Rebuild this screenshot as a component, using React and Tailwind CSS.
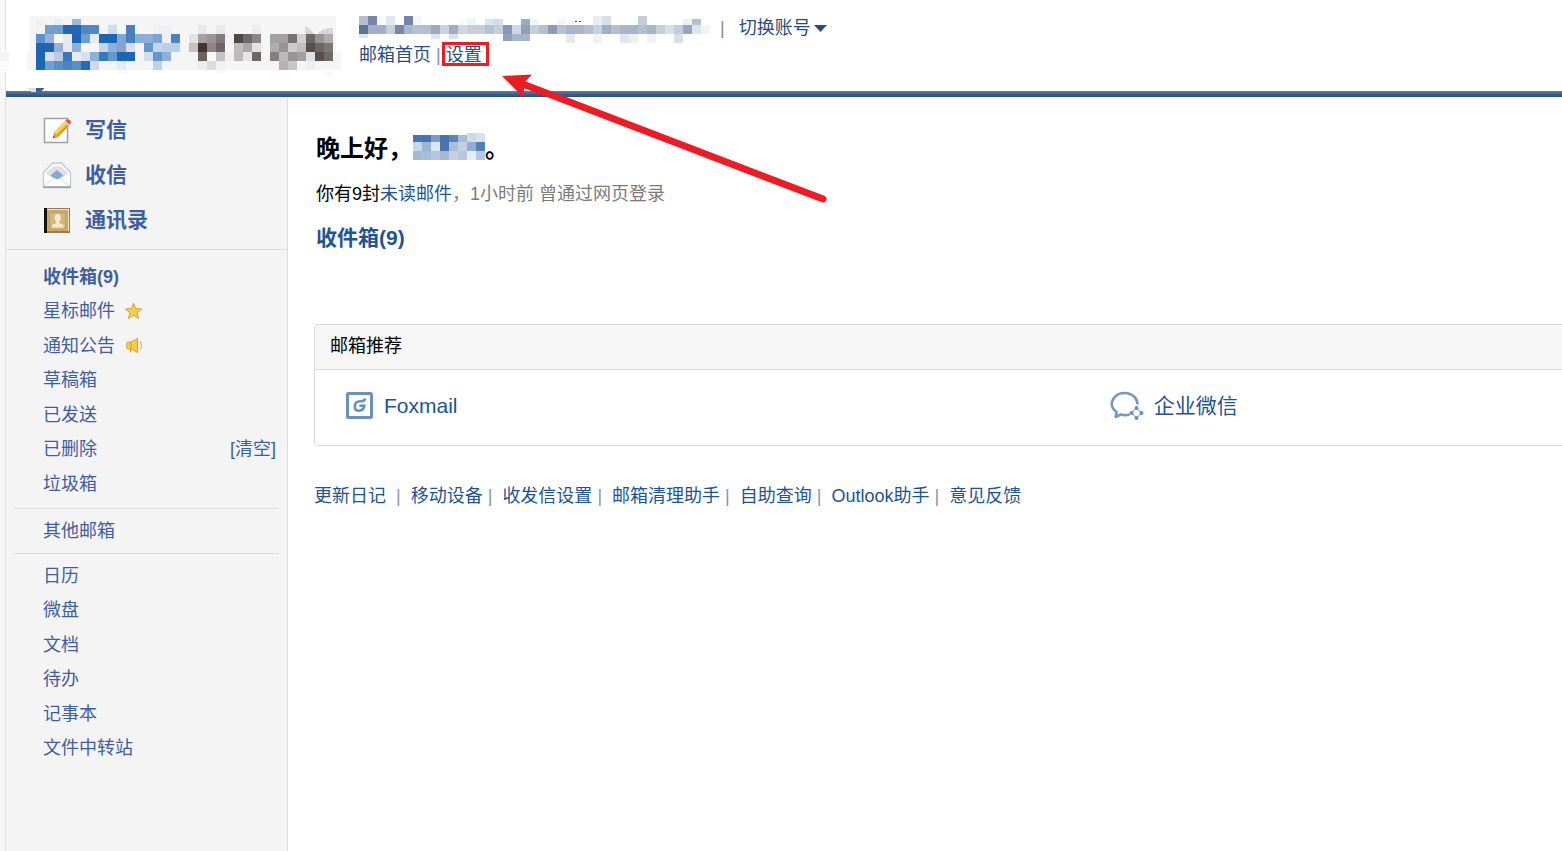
import React from 'react'

const CELL = 9

// each run: [x, y, height, colours left to right]; '' leaves the cell empty
const LOGO = [
  [0, 3, 6, ['#f0f0f0', '', '#e8eef3', '', '#9bb9d9']],
  [0, 9, 9, ['#f2f2f2', '#6f9ed0', '#6f9ed0', '#2468b4', '#2468b4', '#5088c5', '#5088c5', '', '#cfdcea', '', '#4680c2', '', '', '#eef0f3', '#eef0f5', '', '', '', '#e8e8e8', '', '#e8e8e8', '', '', '', '#ededed']],
  [0, 18, 9, ['#5a93cf', '#94b2db', '', '#e8eaee', '#1d66b4', '#6f9ed0', '#e8eaf2', '#1d66b4', '#1d66b4', '#7fa6d4', '#4680c2', '#8cafd7', '#8cafd7', '#7fa3d0', '#eceff5', '#4a84c4', '', '#e2e2e2', '#a5a1a3', '#989394', '#847a79', '#f0f0f0', '#524644', '#706868', '#8b8685', '', '#a3a0a1', '#a3a0a1', '#79716f', '#d0d0d0', '#6e6565', '#989394', '#b0adae']],
  [0, 27, 9, ['#1d66b4', '#1d66b4', '#94b2db', '#e8e8e8', '#8fb0d8', '', '', '#c5d5ea', '#8fb0da', '#7fa6d4', '#d8deee', '', '#6397cf', '#c5d5ea', '#b9cfe6', '#b9cfe6', '', '#c6c0bf', '#423633', '#8b8685', '#6e6565', '', '#c0bcbe', '#aaa5a6', '#e2e2e2', '', '#b0abad', '#989394', '#cbcbcb', '#c0bfc0', '#5a4e4c', '#6e6565', '#7d7874']],
  [0, 36, 9, ['#1d66b4', '#d8dff0', '#b9cce2', '#3478be', '#e8eaf2', '#d8dff0', '#8fb0d8', '#3478be', '#6397cf', '#1d66b4', '#1d66b4', '', '#d3deea', '#6397cf', '#8fb0d8', '', '', '', '#6e6263', '#f8f8f8', '#c3c3c3', '#f0f0f0', '#bdb8ba', '#e5e5e5', '#6e6565', '', '#84807f', '#bababa', '#989394', '#a39fa1', '#e0e0e0', '#5a4e4c', '#706868']],
  [0, 45, 9, ['#1d66b4', '#6f9ed0', '#5a90c8', '#4a84c4', '#5a90c8', '#246cb8', '#cdd8ea', '', '', '#e6eaf2', '', '', '', '#bfd1e8', '', '', '', '', '#ebebeb', '#dcdcdc', '#f0f0f0', '', '', '', '', '', '', '#b5b1b2', '#c6c6c6', '', '#eeeeee']],
]

const ACCOUNT = [
  [0, 0, 9, ['#b5bfd0', '#7588ac', '#f8f9fa', '#e2e6ee', '', '#7284a8', '#f5f6f8']],
  [99, 2, 7, ['#fbfbfc', '#f3f6f8']],
  [126, 3, 6, ['#dde3ea', '#d5dce6', '', '', '#9aabc3', '#f3f6f6', '', '', '#f3f4f7']],
  [234, 0, 9, ['#e9ecf1', '#d8dfe8', '', '', '', '#c3ccd9']],
  [324, 3, 6, ['#eef2f3', '#b4c1cf']],
  [0, 9, 9, ['#5d7297', '#a0adc4', '#a3aec5', '#c8cedd', '#7588ac', '#aab6ca', '#b5bfd0', '#b5bfd0', '#9aaac2', '#cdd2e0', '#9faec4', '#d0d6e0', '#c5cedb', '#c5cedb', '#b5c0d2', '#c5cedb', '#8497b5', '#d0d6e2', '#8f9fba', '#c5cedb', '#b5bfd0', '#8c9cb8', '#b5c2d0', '#a9b5cb', '#a9b5cb', '#b5bfd0', '#c9d0df', '#a0adc6', '#b5bfd0', '#a9b5cb', '#a9b5cb', '#b5bfd0', '#a9b5cb', '#c5cedb', '#d9dee7', '#c5cedb', '#97a5c0', '#dfe3ea', '#f2f3f7']],
  [0, 18, 4, ['#e4e4f0']],
  [72, 18, 5, ['#e0e3ea', '', '#dcdfe8']],
  [144, 18, 7, ['#919fbb', '#a4b5c8', '#a4b5c8']],
  [207, 18, 9, ['#e5e9ef', '', '', '#f0f1f5', '', '', '#e2e5ee', '#eef0f5', '', '#f1f2f6', '', '', '#d9dee7']],
]

const NAME = [
  [0, 2, 7, ['#4674ae', '#4674ae', '#7a9bc6', '#4674ae', '#5a85b8', '#a5bbd6']],
  [54, 0, 9, ['#cfd9ea', '#d8e1ef']],
  [0, 9, 9, ['#c9d5e8', '#9db4d5', '#dde6f1', '#4a75ae', '#a9bedb', '#c3d0e3', '#8eaed3', '#5480b8']],
  [0, 18, 9, ['#a3b9d6', '#a9bedb', '#b5c6df', '#a3b9d6', '#c3d0e3', '#b5c6df', '#e8edf6', '#b9c9df']],
]

const FOLDERS = [
  { name: '收件箱(9)', bold: true },
  { name: '星标邮件', icon: StarIcon },
  { name: '通知公告', icon: HornIcon },
  { name: '草稿箱' },
  { name: '已发送' },
  { name: '已删除', action: '[清空]' },
  { name: '垃圾箱' },
]

const TOOLS = ['日历', '微盘', '文档', '待办', '记事本', '文件中转站']

const LINKS = ['更新日记', '移动设备', '收发信设置', '邮箱清理助手', '自助查询', 'Outlook助手', '意见反馈']

export default function App() {
  return (
    <div className="relative flex min-h-screen overflow-hidden bg-[#f7f7f7] font-['Liberation_Sans','Noto_Sans_CJK_SC',sans-serif] text-[18px] leading-[27px] text-black">
      <div className="ml-[5px] flex min-w-0 flex-1 flex-col border-l border-[#e0e0e0] bg-white">
        <Header />
        <div className="flex flex-1">
          <Sidebar />
          <Home />
        </div>
      </div>
      <Smudges />
      <Arrow />
    </div>
  )
}

function Header() {
  return (
    <header>
      <div className="flex h-[91px] pl-[21px] pt-[15px]">
        <svg className="mt-px h-[61px] w-[314px] shrink-0" viewBox="0 0 314 61" shapeRendering="crispEdges" aria-label="logo">
          <path d="M2 0h307v36h5v18H0V36h2z" fill="#f5f5f5" />
          <path d="M91 54h9v4h-9zM189 54h9v4h-9zM296 54h9v7h-9z" fill="#fafafa" />
          <g transform="translate(9 0)"><Cells runs={LOGO} /></g>
          <path d="M278 10q6 3 9 8h-9zM290 18q6-7 16-6v6z" fill="#d6d6d6" shapeRendering="auto" />
        </svg>
        <div className="ml-[18px] text-[#2b4c7e]">
          <div className="flex h-[27px] items-start">
            <svg className="mt-px h-[27px] w-[351px]" viewBox="0 0 351 27" shapeRendering="crispEdges" aria-hidden="true">
              <Cells runs={ACCOUNT} />
              <path d="M216 5h2v1h-2zM220 5h2v1h-2z" fill="#2b4c7e" />
            </svg>
            <span className="ml-[10px] text-[#7d8bab]">|</span>
            <button type="button" className="ml-[14px] flex items-center gap-[3px]">
              切换账号
              <svg className="h-[7px] w-[13px]" viewBox="0 0 13 7" aria-hidden="true"><path d="M0 0h13L6.500 7z" fill="#2b4c7e" /></svg>
            </button>
          </div>
          <nav className="flex">
            <a href="#home">邮箱首页</a>
            <span className="mx-[5px] text-[#7d8bab]">|</span>
            <a href="#settings" className="relative">
              设置
              <span className="absolute -left-[4px] top-0 h-[24px] w-[47px] border-[3px] border-[#ec1c24]" />
            </a>
          </nav>
        </div>
      </div>
      <div className="h-[6px] bg-linear-to-b from-[#6a7a98] via-[#3d5f8c] to-[#1f5089]" />
    </header>
  )
}

function Sidebar() {
  return (
    <aside className="w-[282px] shrink-0 border-r border-[#dcdcdc] bg-[#f4f4f4] text-[#3f5ea1]">
      <nav className="border-b border-[#dcdcdc] pb-[7px] pl-[36px] pt-[10px] text-[21px] font-bold">
        <BigLink icon={<WriteIcon />} label="写信" />
        <BigLink icon={<InboxIcon />} label="收信" />
        <BigLink icon={<ContactsIcon />} label="通讯录" />
      </nav>
      <ul className="pb-[7px] pt-[10px]">
        {FOLDERS.map(({ name, bold, icon: Icon, action }) => (
          <li key={name} className="flex h-[34px] items-center pl-[37px] pr-[11px] even:h-[35px]">
            <a href="#folder" className={bold ? 'font-bold' : ''}>{name}</a>
            {Icon && <Icon />}
            {action && <button type="button" className="ml-auto">{action}</button>}
          </li>
        ))}
      </ul>
      <div className="mx-2 flex h-[46px] items-center border-y border-[#dcdcdc] pl-[29px]">
        <a href="#other">其他邮箱</a>
      </div>
      <ul className="pt-[5px]">
        {TOOLS.map((name) => (
          <li key={name} className="flex h-[34px] items-center pl-[37px] even:h-[35px]">
            <a href="#tool">{name}</a>
          </li>
        ))}
      </ul>
    </aside>
  )
}

function Home() {
  return (
    <main className="min-w-0 flex-1 pl-[26px]">
      <h1 className="mt-[33px] flex h-[36px] items-center pl-[2px] text-[24px] font-bold">
        晚上好，
        <svg className="-mt-[4px] ml-px h-[27px] w-[72px]" viewBox="0 0 72 27" shapeRendering="crispEdges" aria-hidden="true">
          <Cells runs={NAME} />
        </svg>
        。
      </h1>
      <p className="mt-[15px] pl-[2px]">
        你有9封<a href="#unread" className="text-[#1e5494]">未读邮件</a>
        <span className="text-[#7b7b7b]">，1小时前 曾通过网页登录</span>
      </p>
      <h2 className="mt-[16px] pl-[2px] text-[21px] font-bold text-[#1e5494]">
        <a href="#inbox">收件箱(9)</a>
      </h2>

      <section className="mt-[73px] rounded-l-[5px] border border-r-0 border-[#d9d9d9]">
        <h3 className="rounded-tl-[5px] border-b border-[#d9d9d9] bg-[#f6f6f6] px-[15px] pb-[9px] pt-[8px]">邮箱推荐</h3>
        <div className="grid grid-cols-[49fr_31fr] items-center pb-[24px] pt-[21px] text-[21px] leading-[30px] text-[#1e5494]">
          <a href="#foxmail" className="flex items-center pl-[31px]">
            <FoxmailIcon />
            <span className="ml-[10px]">Foxmail</span>
          </a>
          <a href="#wework" className="flex items-center pl-[31px]">
            <WeworkIcon />
            <span className="ml-[10px]">企业微信</span>
          </a>
        </div>
      </section>

      <footer className="mt-[37px] flex text-[#1e5494]">
        {LINKS.map((label, i) => (
          <React.Fragment key={label}>
            {i > 0 && <span className={`mr-[10px] text-[#8a93ab] ${i === 1 ? 'ml-[10px]' : 'ml-[5px]'}`}>|</span>}
            <a href="#link">{label}</a>
          </React.Fragment>
        ))}
      </footer>
    </main>
  )
}

function BigLink({ icon, label }) {
  return (
    <a href="#big" className="flex h-[45px] items-center gap-[13px]">
      {icon}
      {label}
    </a>
  )
}

function Cells({ runs }) {
  return runs.map(([x, y, h, colors]) =>
    colors.map((c, i) => c && <rect key={`${x}-${y}-${i}`} x={x + i * CELL} y={y} width={CELL} height={h} fill={c} />)
  )
}

function WriteIcon() {
  return (
    <svg className="h-[30px] w-[30px]" viewBox="0 0 30 30" aria-hidden="true">
      <rect x="2.500" y="3.500" width="23" height="24" fill="#fff" stroke="#a2a2a2" strokeWidth="1.500" />
      <path d="M13 22l-2 1 4 1 12-13-2-3z" fill="#cfcfcf" />
      <path d="M12 17.500L23 6l4 4-11 11.500-5 1.500z" fill="#f7b824" />
      <path d="M13.500 18.500L24.500 7" stroke="#ffdf75" strokeWidth="1.600" />
      <path d="M15.500 21L26.500 10" stroke="#d98a17" strokeWidth="1.200" />
      <path d="M12 17.500l4 4-5 1.500z" fill="#d3a066" />
      <path d="M10.800 23.200l.8-2.400 1.600 1.600z" fill="#555" />
      <path d="M22 7l1.500-1.500 4 4L26 11z" fill="#c9c9c9" />
      <path d="M23.500 5.500L25 4.300q1.500-.6 3 1t.8 2.700L27.500 9.500z" fill="#ee4a42" />
    </svg>
  )
}

function InboxIcon() {
  return (
    <svg className="h-[30px] w-[30px]" viewBox="0 0 30 30" aria-hidden="true">
      <path d="M1.500 12.500L10.500 3h9l9 9.500V27h-27z" fill="#fafbfc" stroke="#c3c8ce" strokeWidth="1.300" strokeLinejoin="round" />
      <path d="M4 13l7-6.500h8l7 6.500-7 6H11z" fill="#dde1e5" />
      <path d="M2.500 14l12.500 8 12.500-8v12h-25z" fill="#fff" opacity=".85" />
      <path d="M8.500 15.500L15 10l6.500 5.500-6.500 4z" fill="#86a6d6" />
      <path d="M2.500 26l8-6.500M27.500 26l-8-6.500" stroke="#d4d7da" />
      <path d="M1.200 27.300h27.600" stroke="#949da8" strokeWidth="1.600" />
    </svg>
  )
}

function ContactsIcon() {
  return (
    <svg className="h-[30px] w-[30px]" viewBox="0 0 30 30" aria-hidden="true">
      <rect x="2" y="3" width="26" height="25" fill="#9a7b4d" />
      <rect x="2" y="3" width="3" height="25" fill="#15120e" />
      <rect x="5" y="4" width="22" height="22" fill="#c9aa72" />
      <path d="M5 4.500h22M26.500 4v22" stroke="#efe2c4" />
      <rect x="7.500" y="7.500" width="16" height="17" fill="#d3b67e" stroke="#bf9f68" />
      <path d="M12.500 12.500q0-3.500 3.200-3.500t3.200 3.500q0 2.500-1.600 4v1.500l4.200 2v2.500H10V20l4.200-2v-1.500q-1.700-1.500-1.700-4z" fill="#f4e9cf" />
    </svg>
  )
}

function StarIcon() {
  return (
    <svg className="ml-[9px] h-[20px] w-[20px]" viewBox="0 0 20 20" aria-hidden="true">
      <path d="M9.500 1l2.200 5.700 6.100.2-4.800 3.800 1.700 5.900-5.200-3.400-5.200 3.400L6 10.700 1.200 6.900l6.100-.2z" fill="#f6cc44" stroke="#e2a045" />
    </svg>
  )
}

function HornIcon() {
  return (
    <svg className="ml-[9px] h-[20px] w-[20px]" viewBox="0 0 20 20" aria-hidden="true">
      <path d="M3.500 6H7l6.500-3.500v14L7 13H3.500Q2.500 12.500 2.500 9.500T3.500 6z" fill="#f6cc44" stroke="#e2a045" />
      <path d="M7 6v7M6.500 13v3.500M13.500 2v15" stroke="#dc9334" />
      <path d="M16 5.500q3 4 0 8" fill="none" stroke="#e8b273" strokeWidth="1.300" />
    </svg>
  )
}

function FoxmailIcon() {
  return (
    <svg className="h-[28px] w-[28px]" viewBox="0 0 28 28" fill="none" stroke="#6a90bd" aria-hidden="true">
      <rect x="1.500" y="1.500" width="24" height="24" rx="1" strokeWidth="3" />
      <path d="M19.500 6.500q-1 2.800-5 2.800-5.700.2-5.700 5.400 0 4 4.200 4 4.800 0 5.300-5h-5" strokeWidth="2.600" />
    </svg>
  )
}

function WeworkIcon() {
  return (
    <svg className="h-[30px] w-[34px]" viewBox="0 0 34 30" aria-hidden="true">
      <path d="M27.500 13.500Q27.500 9 24.500 6 20.500 2 14.500 2T5 5.800Q1.800 9 1.800 13q0 4.500 4.700 8L5.700 26l5-2.500q4 1.200 9 0" fill="none" stroke="#7598c2" strokeWidth="2.600" strokeLinejoin="round" />
      <path d="M26.500 17l5 5-5 5-5-5z" fill="none" stroke="#a9c1dc" strokeWidth="1.500" />
      <g fill="#6a90bd">
        <circle cx="26.500" cy="17" r="2" />
        <circle cx="31.500" cy="22" r="2" />
        <circle cx="26.500" cy="27" r="2" />
        <circle cx="21.500" cy="22" r="2" />
      </g>
    </svg>
  )
}

// leftovers of the blur brush, on top of the header and the page edge
function Smudges() {
  return (
    <svg className="pointer-events-none absolute left-0 top-0 h-[93px] w-[46px]" viewBox="0 0 46 93" shapeRendering="crispEdges" aria-hidden="true">
      <path d="M0 52l4-2h5v22H0z" fill="#fff" />
      <path d="M0 52h9v9H0z" fill="#f4f4f4" />
      <path d="M0 61h9v10H0z" fill="#fafafa" />
      <path d="M27 88h9v4h-5z" fill="#dde2ea" />
      <path d="M36 88h8l-4 4h-4z" fill="#42608d" />
    </svg>
  )
}

function Arrow() {
  return (
    <svg className="pointer-events-none absolute left-[500px] top-[72px] h-[134px] w-[330px]" viewBox="0 0 330 134" aria-hidden="true">
      <path d="M24 12.500L323 127" stroke="#ec1c24" strokeWidth="7" strokeLinecap="round" />
      <path d="M2 4l30-1.500-7 7.500-2 15z" fill="#ec1c24" />
    </svg>
  )
}
